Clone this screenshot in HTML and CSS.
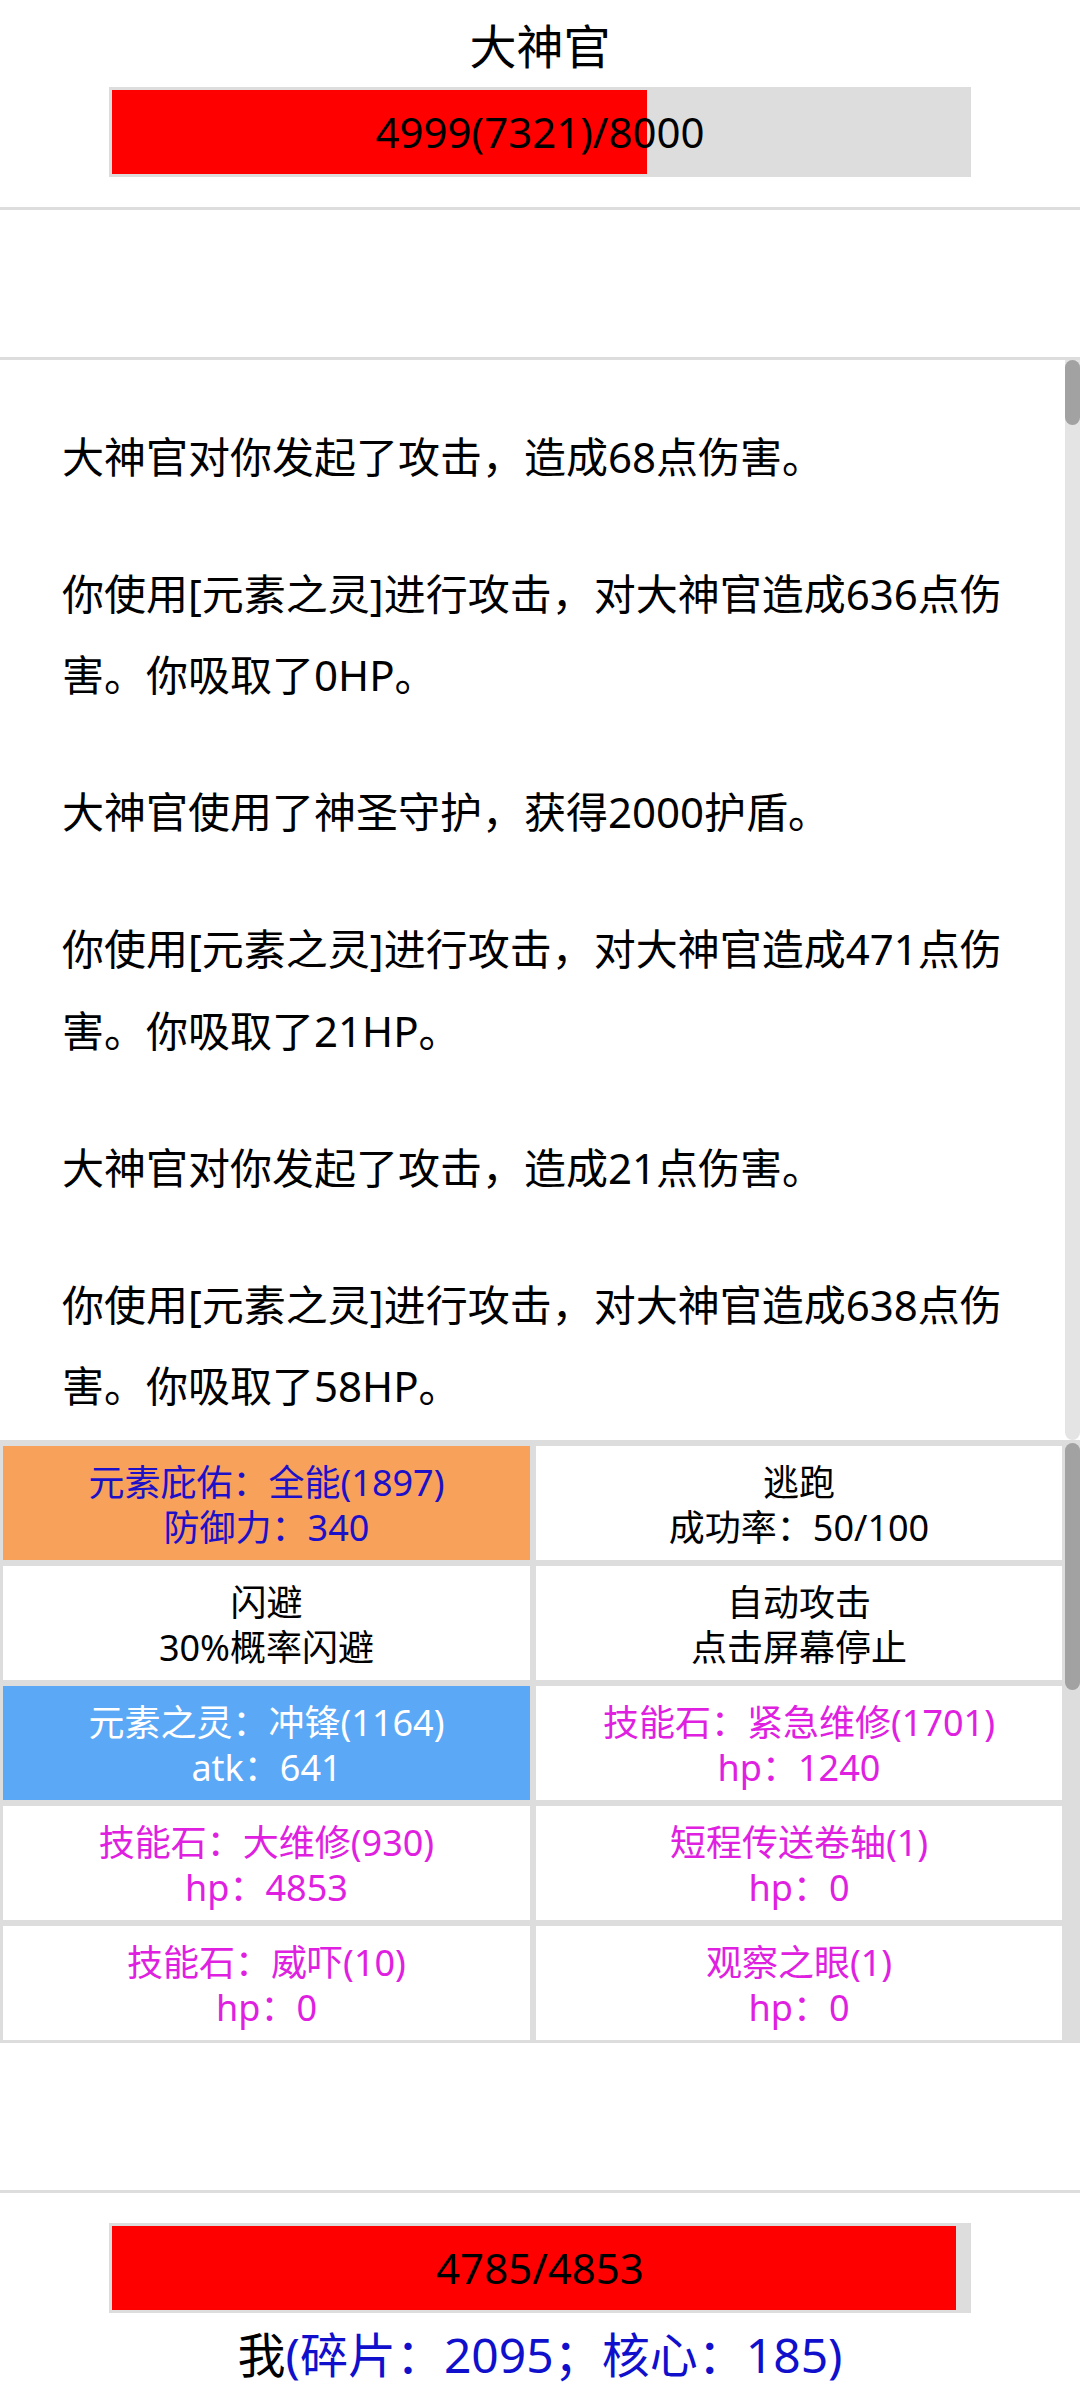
FILE: index.html
```html
<!DOCTYPE html>
<html lang="zh-CN">
<head>
<meta charset="utf-8">
<title>大神官</title>
<link rel="stylesheet" href="styles.css">
</head>
<body>
<div class="screen">
  <header class="enemy">
    <div class="name">大神官</div>
    <div class="hpbar">
      <div class="hpfill" style="width:62.49%"></div>
      <div class="hptext">4999(7321)/8000</div>
    </div>
  </header>

  <section class="spacer"></section>

  <section class="log">
    <div class="log-text">
      <p>大神官对你发起了攻击，造成68点伤害。</p>
      <p>你使用[元素之灵]进行攻击，对大神官造成636点伤害。你吸取了0HP。</p>
      <p>大神官使用了神圣守护，获得2000护盾。</p>
      <p>你使用[元素之灵]进行攻击，对大神官造成471点伤害。你吸取了21HP。</p>
      <p>大神官对你发起了攻击，造成21点伤害。</p>
      <p>你使用[元素之灵]进行攻击，对大神官造成638点伤害。你吸取了58HP。</p>
    </div>
    <div class="track log-track"><div class="thumb log-thumb"></div></div>
  </section>

  <section class="actions">
    <div class="grid">
      <div class="cell cell-guard"><span>元素庇佑：全能(1897)</span><span>防御力：340</span></div>
      <div class="cell"><span>逃跑</span><span>成功率：50/100</span></div>
      <div class="cell"><span>闪避</span><span>30%概率闪避</span></div>
      <div class="cell"><span>自动攻击</span><span>点击屏幕停止</span></div>
      <div class="cell cell-weapon"><span>元素之灵：冲锋(1164)</span><span>atk：641</span></div>
      <div class="cell cell-item"><span>技能石：紧急维修(1701)</span><span>hp：1240</span></div>
      <div class="cell cell-item"><span>技能石：大维修(930)</span><span>hp：4853</span></div>
      <div class="cell cell-item"><span>短程传送卷轴(1)</span><span>hp：0</span></div>
      <div class="cell cell-item"><span>技能石：威吓(10)</span><span>hp：0</span></div>
      <div class="cell cell-item"><span>观察之眼(1)</span><span>hp：0</span></div>
    </div>
    <div class="track grid-track"><div class="thumb grid-thumb"></div></div>
  </section>

  <section class="spacer"></section>

  <footer class="player">
    <div class="hpbar">
      <div class="hpfill" style="width:98.6%"></div>
      <div class="hptext">4785/4853</div>
    </div>
    <div class="me">我<span class="res">(碎片：2095；核心：185)</span></div>
  </footer>
</div>
</body>
</html>
```

FILE: styles.css
```css
* {
  box-sizing: border-box;
  margin: 0;
  padding: 0;
}

html, body {
  background: #ffffff;
}

body {
  width: 1080px;
  height: 2400px;
  overflow: hidden;
  font-family: "Noto Sans", "Noto Sans CJK SC", sans-serif;
  color: #000000;
}

.screen {
  display: flex;
  flex-direction: column;
  height: 2400px;
}

/* enemy header */
.enemy {
  display: flex;
  flex-direction: column;
  align-items: center;
  padding: 14px 0 30px;
  border-bottom: 3px solid #dddddd;
}

.name {
  font-size: 47px;
  line-height: 64px;
}

.hpbar {
  display: grid;
  width: 862px;
  height: 90px;
  margin-top: 9px;
  padding: 3px;
  background: #dddddd;
}

.hpfill {
  grid-area: 1 / 1;
  justify-self: start;
  height: 100%;
  background: #ff0000;
}

.hptext {
  grid-area: 1 / 1;
  align-self: center;
  justify-self: center;
  font-size: 42px;
  line-height: 84px;
  color: #000000;
}

.spacer {
  height: 150px;
  border-bottom: 3px solid #dddddd;
  flex: none;
}

/* battle log */
.log {
  display: flex;
  height: 1083px;
  flex: none;
  border-bottom: 3px solid #dddddd;
}

.log-text {
  flex: 1;
  overflow: hidden;
  padding: 0 46px 0 62px;
}

.log-text p {
  font-size: 42px;
  line-height: 81.5px;
  margin-top: 55.5px;
}

.track {
  flex: none;
  display: flex;
  flex-direction: column;
  align-items: flex-end;
}

.thumb {
  width: 15px;
  border-radius: 8px;
  background: #a2a2a2;
}

.log-track {
  width: 15px;
  background: #e4e4e4;
  border-radius: 0 0 8px 8px;
}

.log-thumb {
  height: 65px;
}

/* action grid */
.actions {
  display: flex;
  height: 600px;
  flex: none;
  background: #dddddd;
}

.grid {
  flex: none;
  display: grid;
  grid-template-columns: 527px 526px;
  grid-auto-rows: 114px;
  gap: 6px;
  padding: 3px 0 3px 3px;
  overflow: hidden;
}

.cell {
  display: flex;
  flex-direction: column;
  align-items: center;
  justify-content: center;
  padding-top: 4px;
  background: #ffffff;
  font-size: 36px;
  line-height: 45.5px;
  color: #000000;
  text-align: center;
  white-space: nowrap;
}

.cell-guard {
  background: #f8a15b;
  color: #1c10c8;
}

.cell-weapon {
  background: #5ba8f6;
  color: #ffffff;
}

.cell-item {
  color: #e020e0;
}

.grid-track {
  width: 18px;
}

.grid-thumb {
  height: 247px;
}

/* player footer */
.player {
  display: flex;
  flex-direction: column;
  align-items: center;
  padding-top: 30px;
}

.player .hpbar {
  margin-top: 0;
}

.me {
  margin-top: 10px;
  font-size: 48px;
  line-height: 64px;
  color: #000000;
}

.res {
  color: #1010cc;
}
```
